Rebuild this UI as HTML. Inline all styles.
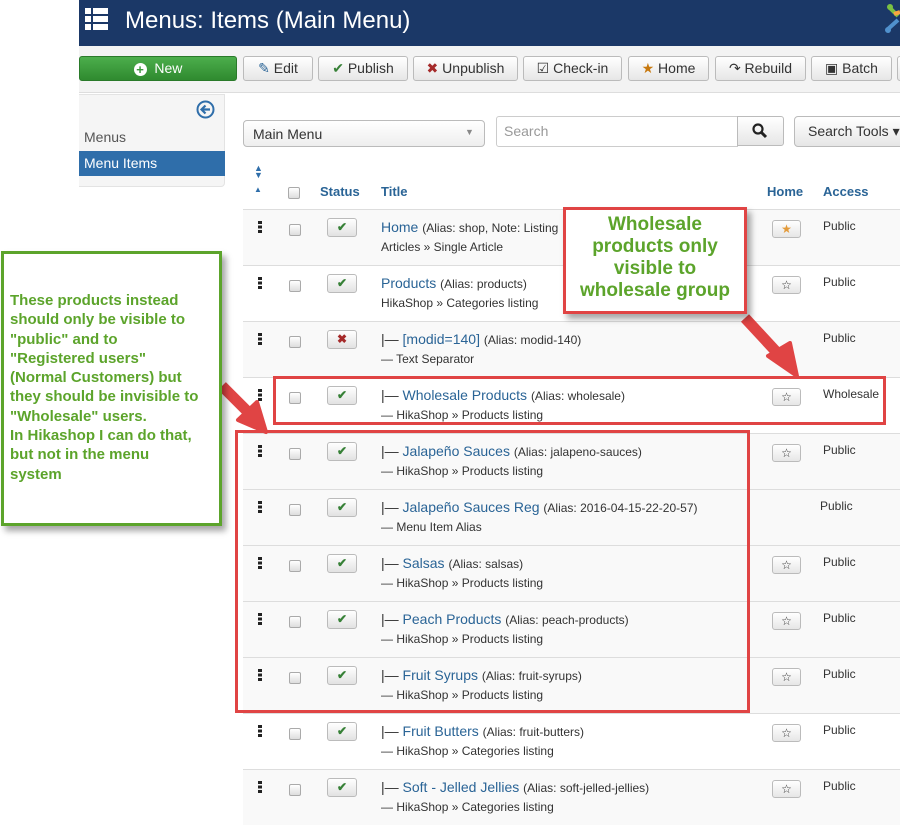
<!DOCTYPE html>
<html><head><meta charset="utf-8">
<style>
*{box-sizing:border-box;margin:0;padding:0}
body{width:900px;height:825px;overflow:hidden;background:#fff;font-family:"Liberation Sans",Arial,sans-serif;position:relative;color:#333}
.abs{position:absolute}
.hdr{left:79px;top:0;width:821px;height:46px;background:#1b3867}
.tb{left:79px;top:46px;width:821px;height:47px;background:#f3f3f3;border-bottom:1px solid #ddd}
.btn{position:absolute;top:56px;height:25px;border:1px solid #bbb;border-radius:3px;background:linear-gradient(#fff,#e6e6e6);font-size:14px;color:#333;line-height:23px;text-align:center;white-space:nowrap}
.side{left:79px;top:94px;width:146px;height:93px;background:#f5f5f5;border:1px solid #e3e3e3;border-left:none;border-radius:0 0 4px 0}
.row{position:absolute;left:243px;width:657px;height:56px;border-top:1px solid #ddd;background:#f9f9f9}
.row.w{background:#fff}
.dh{position:absolute;left:15px;top:11px;width:4px;height:12px;background:repeating-linear-gradient(#222 0 3px,transparent 3px 4.5px)}
.cb{position:absolute;left:46px;top:14px;width:12px;height:12px;border:1px solid #aaa;border-radius:2px;background:linear-gradient(#fff,#ddd)}
.st{position:absolute;left:84px;top:8px;width:30px;height:19px;border:1px solid #bbb;border-radius:3px;background:linear-gradient(#fff,#e2e2e2);text-align:center;font-size:12px;line-height:17px;color:#378137;font-weight:bold}
.t1{position:absolute;left:138px;top:9px;font-size:14px;color:#2a6496;white-space:nowrap}
.t1 small{font-size:12px;color:#333}
.t1 .p{color:#333}
.t2{position:absolute;left:138px;top:30px;font-size:12px;color:#333;white-space:nowrap}
.hm{position:absolute;left:529px;top:10px;width:29px;height:18px;border:1px solid #bbb;border-radius:3px;background:linear-gradient(#fff,#e6e6e6);text-align:center;font-size:12px;line-height:16px;color:#333}
.ac{position:absolute;left:580px;top:9px;font-size:12px;color:#333}
</style></head><body>
<div class="abs hdr"></div>
<div class="abs" style="left:85px;top:8px;width:23px;height:23px">
 <div class="abs" style="left:0;top:0;width:6px;height:6px;background:#fff"></div><div class="abs" style="left:8px;top:0;width:15px;height:6px;background:#fff"></div>
 <div class="abs" style="left:0;top:8px;width:6px;height:6px;background:#fff"></div><div class="abs" style="left:8px;top:8px;width:15px;height:6px;background:#fff"></div>
 <div class="abs" style="left:0;top:16px;width:6px;height:6px;background:#fff"></div><div class="abs" style="left:8px;top:16px;width:15px;height:6px;background:#fff"></div>
</div>
<div class="abs" style="left:125px;top:7px;font-size:24px;color:#fff">Menus: Items (Main Menu)</div>
<svg class="abs" style="left:884px;top:2px" width="16" height="32"><circle cx="6" cy="5" r="3" fill="#7ac143"/><circle cx="4" cy="28" r="3" fill="#5091cd"/><path d="M6 6 L14 14" stroke="#7ac143" stroke-width="4"/><path d="M4 27 L14 18" stroke="#5091cd" stroke-width="4"/><path d="M10 12 L16 10" stroke="#f9a541" stroke-width="4"/></svg>

<div class="abs tb"></div>
<div class="btn" style="left:79px;width:158px;background:linear-gradient(#4cae4c,#2f8a2f);border-color:#2a7a2a;color:#fff"><span style="display:inline-block;width:13px;height:13px;border-radius:50%;background:#fff;color:#3c9a3c;font-size:13px;line-height:13px;font-weight:bold;vertical-align:-1px">+</span>&nbsp; New</div>
<div class="btn" style="left:243px;width:70px"><span style="color:#2a6496">&#9998;</span> Edit</div>
<div class="btn" style="left:318px;width:90px"><span style="color:#378137">&#10004;</span> Publish</div>
<div class="btn" style="left:413px;width:105px"><span style="color:#a52a2a">&#10006;</span> Unpublish</div>
<div class="btn" style="left:523px;width:99px">&#9745; Check-in</div>
<div class="btn" style="left:628px;width:81px"><span style="color:#c7780e">&#9733;</span> Home</div>
<div class="btn" style="left:715px;width:91px">&#8631; Rebuild</div>
<div class="btn" style="left:811px;width:81px">&#9635; Batch</div>
<div class="btn" style="left:897px;width:10px"></div>

<div class="abs side"></div>
<svg class="abs" style="left:196px;top:100px" width="19" height="19"><circle cx="9.5" cy="9.5" r="8" fill="none" stroke="#2f6eaa" stroke-width="2"/><path d="M14 9.5H6M9.5 5.5L5.5 9.5L9.5 13.5" fill="none" stroke="#2f6eaa" stroke-width="2.2"/></svg>
<div class="abs" style="left:84px;top:129px;font-size:14px;color:#555">Menus</div>
<div class="abs" style="left:79px;top:151px;width:146px;height:25px;background:#2f6eaa"></div>
<div class="abs" style="left:84px;top:155px;font-size:14px;color:#fff">Menu Items</div>

<div class="abs" style="left:243px;top:120px;width:242px;height:27px;border:1px solid #bbb;border-radius:4px;background:linear-gradient(#fff,#eee)"></div>
<div class="abs" style="left:253px;top:126px;font-size:14px;color:#333">Main Menu</div>
<div class="abs" style="left:465px;top:127px;font-size:9px;color:#888">&#9660;</div>
<div class="abs" style="left:496px;top:116px;width:242px;height:31px;border:1px solid #ccc;border-radius:3px 0 0 3px"></div>
<div class="abs" style="left:504px;top:123px;font-size:14px;color:#999">Search</div>
<div class="abs" style="left:737px;top:116px;width:47px;height:30px;border:1px solid #bbb;border-radius:0 3px 3px 0;background:linear-gradient(#fff,#e6e6e6)"></div>
<svg class="abs" style="left:751px;top:122px" width="17" height="17"><circle cx="7" cy="7" r="4.5" fill="none" stroke="#222" stroke-width="2.2"/><path d="M10 10L15 15" stroke="#222" stroke-width="3"/></svg>
<div class="abs" style="left:794px;top:116px;width:120px;height:31px;border:1px solid #bbb;border-radius:4px;background:linear-gradient(#fff,#e6e6e6)"></div>
<div class="abs" style="left:808px;top:123px;font-size:14px;color:#333">Search Tools &#9662;</div>

<div class="abs" style="left:254px;top:165px;font-size:9px;color:#2f6eaa;line-height:7px">&#9650;<br>&#9660;</div>
<div class="abs" style="left:254px;top:185px;font-size:8px;color:#2f6eaa">&#9650;</div>
<div class="abs" style="left:288px;top:187px;width:12px;height:12px;border:1px solid #aaa;border-radius:2px;background:linear-gradient(#fff,#ddd)"></div>
<div class="abs" style="left:320px;top:184px;font-size:13px;font-weight:bold;color:#2a6496">Status</div>
<div class="abs" style="left:381px;top:184px;font-size:13px;font-weight:bold;color:#2a6496">Title</div>
<div class="abs" style="left:767px;top:184px;font-size:13px;font-weight:bold;color:#2a6496">Home</div>
<div class="abs" style="left:823px;top:184px;font-size:13px;font-weight:bold;color:#2a6496">Access</div>

<div class="row" style="top:209px"><div class="dh"></div><div class="cb"></div><div class="st">&#10004;</div><div class="t1">Home <small>(Alias: shop, Note: Listing</small></div><div class="t2">Articles » Single Article</div><div class="hm" style="color:#e39a3a">&#9733;</div><div class="ac">Public</div></div>
<div class="row w" style="top:265px"><div class="dh"></div><div class="cb"></div><div class="st">&#10004;</div><div class="t1">Products <small>(Alias: products)</small></div><div class="t2">HikaShop » Categories listing</div><div class="hm">&#9734;</div><div class="ac">Public</div></div>
<div class="row" style="top:321px"><div class="dh"></div><div class="cb"></div><div class="st" style="color:#a52a2a">&#10006;</div><div class="t1"><span class="p">|—</span> [modid=140] <small>(Alias: modid-140)</small></div><div class="t2">— Text Separator</div><div class="ac">Public</div></div>
<div class="row w" style="top:377px"><div class="dh"></div><div class="cb"></div><div class="st">&#10004;</div><div class="t1"><span class="p">|—</span> Wholesale Products <small>(Alias: wholesale)</small></div><div class="t2">— HikaShop » Products listing</div><div class="hm">&#9734;</div><div class="ac">Wholesale</div></div>
<div class="row" style="top:433px"><div class="dh"></div><div class="cb"></div><div class="st">&#10004;</div><div class="t1"><span class="p">|—</span> Jalapeño Sauces <small>(Alias: jalapeno-sauces)</small></div><div class="t2">— HikaShop » Products listing</div><div class="hm">&#9734;</div><div class="ac">Public</div></div>
<div class="row" style="top:489px"><div class="dh"></div><div class="cb"></div><div class="st">&#10004;</div><div class="t1"><span class="p">|—</span> Jalapeño Sauces Reg <small>(Alias: 2016-04-15-22-20-57)</small></div><div class="t2">— Menu Item Alias</div><div class="ac" style="left:577px">Public</div></div>
<div class="row" style="top:545px"><div class="dh"></div><div class="cb"></div><div class="st">&#10004;</div><div class="t1"><span class="p">|—</span> Salsas <small>(Alias: salsas)</small></div><div class="t2">— HikaShop » Products listing</div><div class="hm">&#9734;</div><div class="ac">Public</div></div>
<div class="row" style="top:601px"><div class="dh"></div><div class="cb"></div><div class="st">&#10004;</div><div class="t1"><span class="p">|—</span> Peach Products <small>(Alias: peach-products)</small></div><div class="t2">— HikaShop » Products listing</div><div class="hm">&#9734;</div><div class="ac">Public</div></div>
<div class="row" style="top:657px"><div class="dh"></div><div class="cb"></div><div class="st">&#10004;</div><div class="t1"><span class="p">|—</span> Fruit Syrups <small>(Alias: fruit-syrups)</small></div><div class="t2">— HikaShop » Products listing</div><div class="hm">&#9734;</div><div class="ac">Public</div></div>
<div class="row w" style="top:713px"><div class="dh"></div><div class="cb"></div><div class="st">&#10004;</div><div class="t1"><span class="p">|—</span> Fruit Butters <small>(Alias: fruit-butters)</small></div><div class="t2">— HikaShop » Categories listing</div><div class="hm">&#9734;</div><div class="ac">Public</div></div>
<div class="row" style="top:769px"><div class="dh"></div><div class="cb"></div><div class="st">&#10004;</div><div class="t1"><span class="p">|—</span> Soft - Jelled Jellies <small>(Alias: soft-jelled-jellies)</small></div><div class="t2">— HikaShop » Categories listing</div><div class="hm">&#9734;</div><div class="ac">Public</div></div>

<div class="abs" style="left:273px;top:376px;width:613px;height:49px;border:3px solid #e04444"></div>
<div class="abs" style="left:235px;top:430px;width:515px;height:283px;border:3px solid #e04444"></div>
<svg class="abs" style="left:0;top:0" width="900" height="825">
 <path d="M745 318 L782 358" stroke="#e04444" stroke-width="11"/>
 <path d="M768 356 L797 376 L790 343 Z" fill="#e04444" stroke="#e04444" stroke-width="4" stroke-linejoin="round"/>
 <path d="M222 386 L252 416" stroke="#e04444" stroke-width="11"/>
 <path d="M238 420 L266 432 L257 402 Z" fill="#e04444" stroke="#e04444" stroke-width="4" stroke-linejoin="round"/>
</svg>
<div class="abs" style="left:1px;top:251px;width:221px;height:275px;border:3px solid #5ca42b;background:#fff;box-shadow:4px 5px 6px rgba(0,0,0,.35)"></div>
<div class="abs" style="left:10px;top:291px;width:212px;font-size:15px;line-height:19.3px;font-weight:bold;color:#5ca42b;white-space:nowrap">These products instead<br>should only be visible to<br>"public" and to<br>"Registered users"<br>(Normal Customers) but<br>they should be invisible to<br>"Wholesale" users.<br>In Hikashop I can do that,<br>but not in the menu<br>system</div>
<div class="abs" style="left:563px;top:207px;width:184px;height:107px;border:3px solid #e04444;background:#fff;box-shadow:4px 5px 6px rgba(0,0,0,.35)"></div>
<div class="abs" style="left:563px;top:214px;width:184px;text-align:center;font-size:19px;line-height:22px;font-weight:bold;color:#5ca42b">Wholesale<br>products only<br>visible to<br>wholesale group</div>
</body></html>
